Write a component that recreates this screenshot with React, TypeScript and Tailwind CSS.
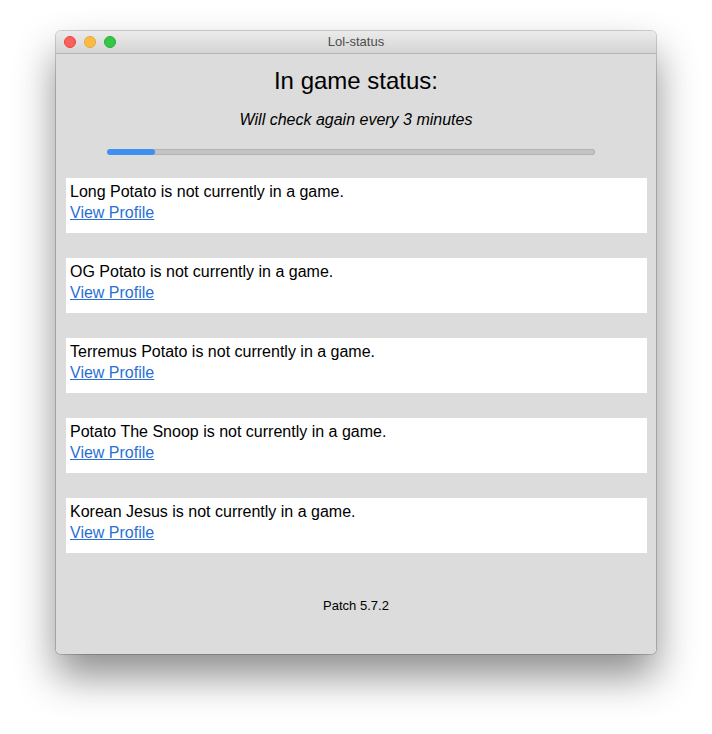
const players = [
  "Long Potato",
  "OG Potato",
  "Terremus Potato",
  "Potato The Snoop",
  "Korean Jesus",
];

const StatusCard = ({ name }: { name: string }) => (
  <div className="bg-white pl-[4px] pt-[3px] pb-[10px] text-[16px] leading-[21px] text-black">
    <div>{name} is not currently in a game.</div>
    <a href="#" className="text-[#2a6fd6] underline">
      View Profile
    </a>
  </div>
);

export default function App() {
  return (
    <div className="min-h-[734px] bg-white pl-[56px] pt-[31px] font-['Liberation_Sans',Arial,sans-serif]">
      <div className="w-[600px] overflow-hidden rounded-[5px] shadow-[0_22px_40px_rgba(0,0,0,0.45),0_0_0_1px_rgba(0,0,0,0.18)]">
        {/* title bar */}
        <div className="relative flex h-[23px] items-center border-b border-[#b4b4b4] bg-gradient-to-b from-[#ebebeb] to-[#d5d5d5]">
          <div className="ml-[8px] flex gap-[8px]">
            <span className="h-[12px] w-[12px] rounded-full border border-[#e2463f] bg-[#fc605c]" />
            <span className="h-[12px] w-[12px] rounded-full border border-[#e1a73e] bg-[#fdbc40]" />
            <span className="h-[12px] w-[12px] rounded-full border border-[#2dac2f] bg-[#34c84a]" />
          </div>
          <div className="absolute inset-0 flex items-center justify-center text-[13px] text-[#4d4d4d]">
            Lol-status
          </div>
        </div>

        <div className="flex h-[600px] flex-col bg-[#dcdcdc]">
          <h1 className="mt-[13px] text-center text-[24px] leading-[28px] text-black">
            In game status:
          </h1>
          <p className="mt-[15px] text-center text-[16px] italic leading-[20px] text-black">
            Will check again every 3 minutes
          </p>
          <div className="ml-[51px] mt-[19px] h-[6px] w-[488px] overflow-hidden rounded-full bg-[#c2c2c2] shadow-[inset_0_0_0_1px_#b3b3b3]">
            <div className="h-full w-[48px] rounded-full bg-[#3d8ff0]" />
          </div>

          <div className="ml-[10px] mr-[9px] mt-[23px] flex flex-col gap-[25px]">
            {players.map((p) => (
              <StatusCard key={p} name={p} />
            ))}
          </div>

          <div className="mt-[45px] text-center text-[13px] leading-[16px] text-black">
            Patch 5.7.2
          </div>
        </div>
      </div>
    </div>
  );
}
